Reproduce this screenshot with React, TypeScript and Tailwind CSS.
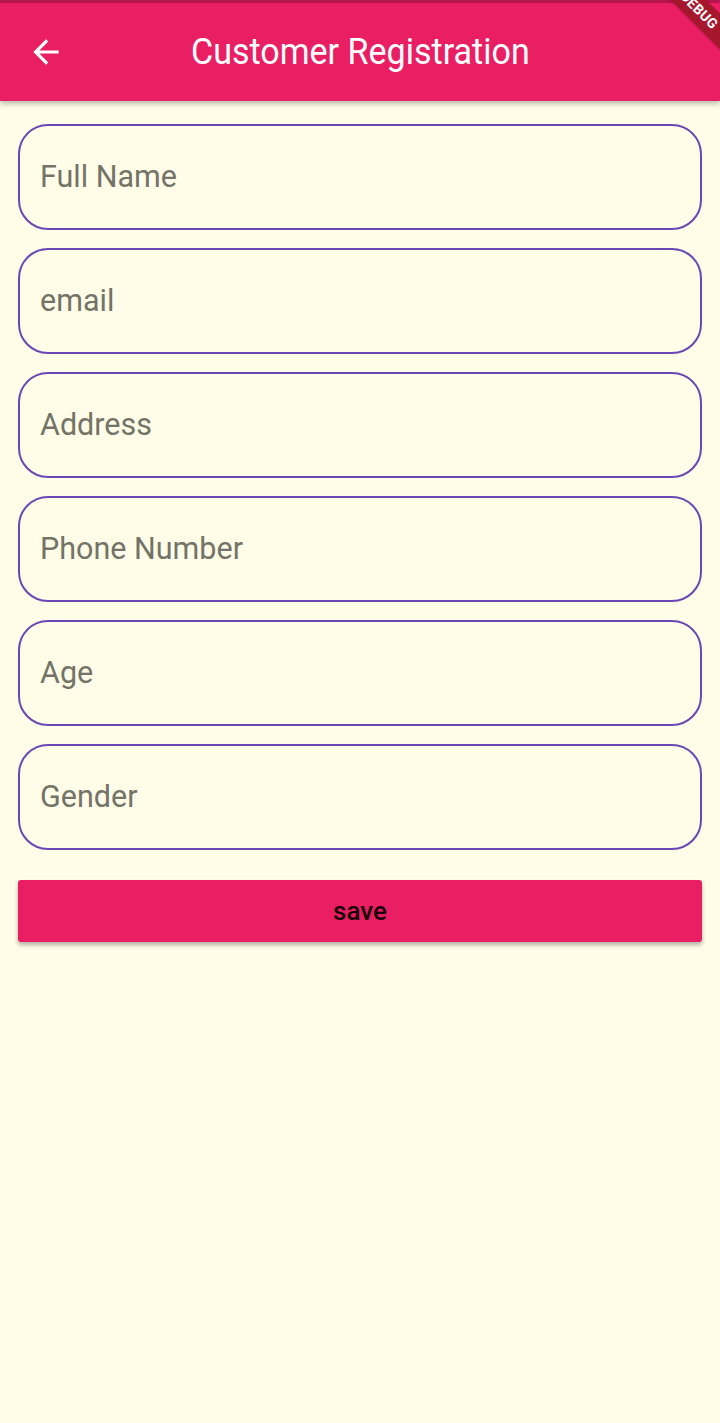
import React from 'react';

const FIELDS = ['Full Name', 'email', 'Address', 'Phone Number', 'Age', 'Gender'];

export default function App() {
  return (
    <div className="relative min-h-[1423px] w-[720px] overflow-hidden bg-[#fffde7] font-['Roboto',sans-serif]">
      {/* status strip */}
      <div className="h-[3px] bg-[#b8164f]" />

      {/* App bar */}
      <div className="relative z-10 flex h-[98px] items-center bg-[#e91e63] shadow-[0_3px_5px_rgba(0,0,0,0.25)]">
        <div className="flex w-[96px] justify-center">
          <svg width="38" height="38" viewBox="0 0 24 24" fill="white" className="-ml-[4px]">
            <path d="M20 11H7.83l5.59-5.59L12 4l-8 8 8 8 1.41-1.41L7.83 13H20v-2z" />
          </svg>
        </div>
        <h1 className="ml-[95px] origin-left scale-x-[0.92] whitespace-nowrap text-[37px] font-normal text-white">
          Customer Registration
        </h1>
      </div>

      {/* Debug ribbon */}
      <div className="absolute right-[-44px] top-[-2px] z-20 w-[130px] rotate-45 bg-[#a5172c] py-[2px] text-center text-[14px] font-bold tracking-wide text-white shadow">
        DEBUG
      </div>

      {/* Form */}
      <div className="flex flex-col gap-[18px] px-[18px] pt-[23px]">
        {FIELDS.map(label => (
          <div
            key={label}
            className="flex h-[106px] items-center rounded-[30px] border-2 border-[#6b47b5] px-[20px]"
          >
            <span className="text-[30.5px] text-[#737367]">{label}</span>
          </div>
        ))}
        <button className="mt-[12px] flex h-[62px] items-center justify-center rounded-[3px] bg-[#e91e63] text-[26px] font-medium text-[#1a0008] shadow-[0_3px_4px_rgba(0,0,0,0.3)]">
          save
        </button>
      </div>
    </div>
  );
}
